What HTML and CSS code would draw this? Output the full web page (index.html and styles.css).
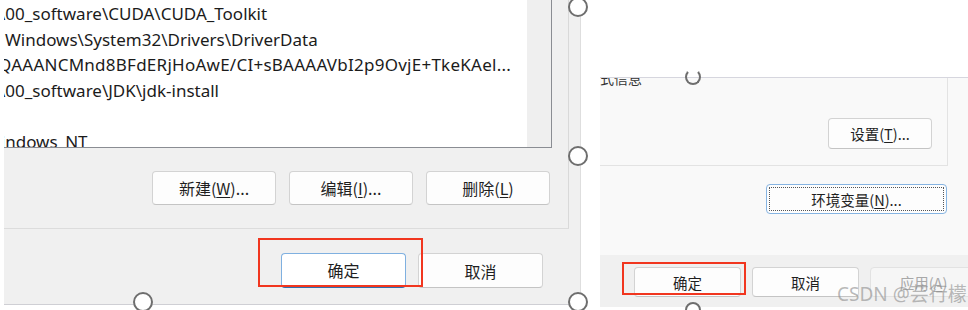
FILE: index.html
```html
<!DOCTYPE html>
<html lang="zh-CN">
<head>
    <meta charset="UTF-8">
    <title>环境变量</title>
    <link rel="stylesheet" href="styles.css">
</head>
<body>
    <!-- Screenshot 1: edit environment variable dialog -->
    <div class="shot shot-left">
        <div class="group">
            <div class="listbox">
                <div class="rows">
                    <div class="row cut-a">\00_software\CUDA\CUDA_Toolkit</div>
                    <div class="row cut-b">Windows\System32\Drivers\DriverData</div>
                    <div class="row cut-c">QAAANCMnd8BFdERjHoAwE/CI+sBAAAAVbI2p9OvjE+TkeKAel...</div>
                    <div class="row cut-a">\00_software\JDK\jdk-install</div>
                    <div class="row"></div>
                    <div class="row cut-d">Windows_NT</div>
                </div>
                <div class="scroll"></div>
            </div>
            <div class="btn-row">
                <button class="btn">新建(<u>W</u>)...</button>
                <button class="btn">编辑(<u>I</u>)...</button>
                <button class="btn">删除(<u>L</u>)</button>
            </div>
        </div>
        <div class="footer">
            <button class="btn btn-default">确定</button>
            <button class="btn">取消</button>
        </div>
    </div>

    <!-- Screenshot 2: system properties dialog -->
    <div class="shot shot-right">
        <div class="r-top">
            <div class="r-group">
                <div class="cap">式信息</div>
                <div class="set-row">
                    <button class="btn btn-sm btn-set">设置(<u>T</u>)...</button>
                </div>
            </div>
            <div class="env-row">
                <button class="btn btn-sm btn-env">环境变量(<u>N</u>)...</button>
            </div>
        </div>
        <div class="r-foot">
            <button class="btn btn-sm">确定</button>
            <button class="btn btn-sm">取消</button>
            <button class="btn btn-sm btn-off">应用(<u>A</u>)</button>
        </div>
    </div>

    <!-- overlays: highlight boxes, resize handles, watermark -->
    <div class="mark mark-left"></div>
    <div class="mark mark-right"></div>
    <span class="handle h-1"></span>
    <span class="handle h-2"></span>
    <span class="handle h-3"></span>
    <span class="handle h-4"></span>
    <span class="handle handle-sm h-5"></span>
    <span class="handle handle-sm h-6"></span>
    <div class="watermark">CSDN @芸行檬</div>
</body>
</html>
```
FILE: styles.css
```css
* { box-sizing: border-box; }
body { margin: 0; width: 968px; height: 310px; overflow: hidden; background: #fff; display: flex; align-items: flex-start; position: relative; font-family: "Noto Sans", "Open Sans", "Noto Sans CJK SC", sans-serif; color: #1b1b1b; }

.btn { font-family: "Noto Sans CJK SC", "Noto Sans", sans-serif; font-size: 16px; color: #1f1f1f; background: #fdfdfd; border: 1px solid #d3d3d3; border-bottom-color: #c4c4c4; border-radius: 4px; padding: 0; display: flex; align-items: center; justify-content: center; }
.btn u { text-underline-offset: 2px; }

/* left screenshot */
.shot-left { margin-left: 4px; width: 577px; height: 305px; background: #f0f0f0; border-right: 1px solid #dedede; border-bottom: 1px solid #cfcfd4; }
.group { width: 565px; height: 229px; border-right: 1px solid #d9d9d9; border-bottom: 1px solid #dcdcdc; }
.listbox { display: flex; width: 548px; height: 148px; border-right: 1px solid #8a8d93; border-bottom: 1px solid #8a8d93; }
.rows { width: 523px; background: #fff; overflow: hidden; padding-top: 1px; font-size: 17px; }
.row { height: 25.6px; line-height: 25.6px; white-space: nowrap; overflow: hidden; }
.cut-a { text-indent: -5px; }
.cut-b { text-indent: 1px; }
.cut-c { text-indent: -6px; letter-spacing: 0.25px; }
.cut-d { text-indent: -19px; }
.scroll { flex: 1; background: #efefef; }
.btn-row { display: flex; justify-content: flex-end; gap: 13px; margin-top: 23px; padding-right: 18px; }
.btn-row .btn { width: 124px; height: 34px; }
.footer { display: flex; justify-content: flex-end; gap: 12px; padding-top: 24px; padding-right: 37px; }
.footer .btn { width: 125px; height: 35px; }
.btn-default { background: #fff; border-color: #7fb0e0; border-bottom: 2px solid #2f6fb0; }

/* right screenshot */
.shot-right { margin-left: 19px; margin-top: 77px; width: 368px; height: 230px; border-top: 1px solid #d6d6de; overflow: hidden; }
.r-top { height: 177px; background: #f9f9f9; }
.r-group { width: 348px; height: 88px; border-right: 1px solid #e3e3e3; border-bottom: 1px solid #e3e3e3; overflow: hidden; }
.cap { font-family: "Noto Sans CJK SC", sans-serif; font-size: 14px; line-height: 16px; margin-top: -8px; color: #333; }
.set-row { display: flex; justify-content: flex-end; padding-right: 15px; margin-top: 32px; }
.btn-sm { font-size: 14.5px; height: 30px; }
.btn-set { width: 104px; height: 31px; }
.env-row { display: flex; justify-content: flex-end; padding-right: 21px; padding-top: 18px; }
.btn-env { width: 181px; border: 1px solid #86b4e2; outline: 1px dotted #555; outline-offset: -4px; }
.r-foot { height: 53px; background: #f0f0f0; display: flex; gap: 11px; padding-top: 12px; padding-left: 34px; }
.r-foot .btn { width: 107px; flex: none; }
.btn-off { color: #a8a8a8; background: #f6f6f6; border-color: #e2e2e2; }

/* overlays */
.mark { position: absolute; border: 2px solid #f1361f; }
.mark-left { left: 258px; top: 238px; width: 165px; height: 49px; }
.mark-right { left: 622px; top: 262px; width: 124px; height: 33px; }
.handle { position: absolute; width: 20px; height: 20px; border-radius: 50%; border: 2px solid #6e6e6e; background: #fff; }
.handle-sm { width: 16px; height: 16px; }
.h-1 { left: 568px; top: -3px; }
.h-2 { left: 568px; top: 146px; }
.h-3 { left: 568px; top: 292px; }
.h-4 { left: 133px; top: 292px; }
.h-5 { left: 685px; top: 69px; border-top-color: transparent; background: transparent; }
.h-6 { left: 685px; top: 302px; }
.watermark { position: absolute; left: 837px; top: 279px; font-family: "Noto Sans", "Noto Sans CJK SC", sans-serif; font-size: 19px; color: rgba(140, 140, 140, 0.6); white-space: nowrap; }
```
